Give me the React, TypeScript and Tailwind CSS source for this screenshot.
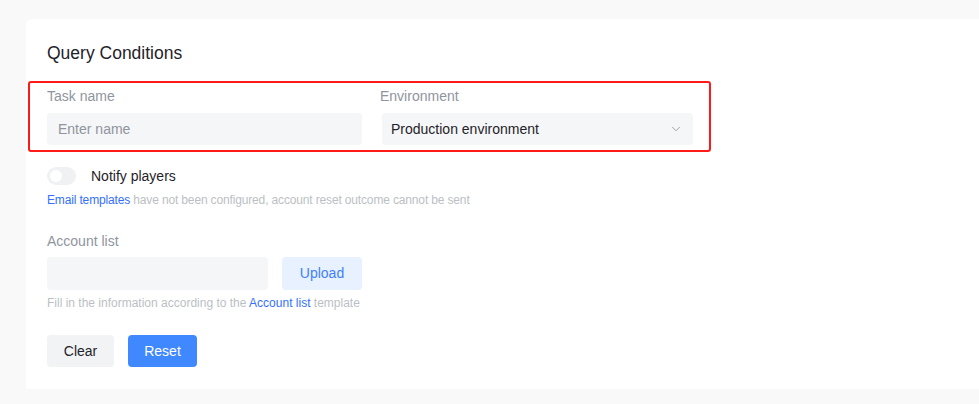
import { ChevronDown } from "lucide-react";

const App = () => {
  return (
    <div
      className="w-[979px] h-[404px] bg-[#f9f9f9] pl-[26px] pt-[19px] overflow-hidden"
      style={{ fontFamily: '"Liberation Sans", Arial, sans-serif' }}
    >
      <div className="h-[370px] w-[960px] bg-white rounded-tl-md pl-[21px] pt-[23px]">
        {/* Title */}
        <h2 className="text-[17.5px] leading-[22px] text-[#1f2329]">Query Conditions</h2>

        {/* Highlighted row */}
        <div className="mt-[17px] -ml-[19px] w-[683px] h-[71px] border-2 border-[#ff1a1a] rounded-[3px] pl-[17px] pt-[3px] flex gap-[20px]">
          <div className="w-[315px]">
            <div className="text-[14px] leading-[20px] text-[#8f959e]">Task name</div>
            <div className="mt-[7px] h-[32px] bg-[#f5f6f7] rounded-[4px] px-[11px] flex items-center text-[14px] text-[#8f959e]">
              Enter name
            </div>
          </div>
          <div className="w-[311px]">
            <div className="text-[14px] leading-[20px] text-[#8f959e] -ml-[2px]">Environment</div>
            <div className="mt-[7px] h-[32px] bg-[#f5f6f7] rounded-[4px] pl-[9px] pr-[10px] flex items-center justify-between text-[14px] text-[#1f2329]">
              <span>Production environment</span>
              <ChevronDown className="w-[14px] h-[14px] text-[#8f959e]" strokeWidth={1.5} />
            </div>
          </div>
        </div>

        {/* Notify toggle */}
        <div className="mt-[14px] flex items-center h-[20px]">
          <div className="w-[29px] h-[18px] rounded-full bg-[#f0f1f2] flex items-center pl-[3px]">
            <div className="w-[12px] h-[12px] rounded-full bg-white" />
          </div>
          <span className="ml-[15px] text-[14px] text-[#1f2329]">Notify players</span>
        </div>
        <div className="mt-[5px] text-[12px] leading-[18px] text-[#bbbfc4] tracking-[-0.15px]">
          <span className="text-[#3370ff]">Email templates</span> have not been configured, account reset outcome cannot be sent
        </div>

        {/* Account list */}
        <div className="mt-[22px] text-[14px] leading-[20px] text-[#8f959e]">Account list</div>
        <div className="mt-[6px] flex gap-[14px]">
          <div className="w-[221px] h-[33px] bg-[#f5f6f7] rounded-[4px]" />
          <button className="w-[80px] h-[33px] bg-[#e8f1ff] rounded-[4px] text-[14px] text-[#4080ff]">Upload</button>
        </div>
        <div className="mt-[4px] text-[12px] leading-[18px] text-[#bbbfc4]">
          Fill in the information according to the <span className="text-[#3370ff]">Account list</span> template
        </div>

        {/* Actions */}
        <div className="mt-[23px] flex gap-[14px]">
          <button className="w-[67px] h-[32px] bg-[#f2f3f5] rounded-[4px] text-[14px] text-[#1f2329]">Clear</button>
          <button className="w-[69px] h-[32px] bg-[#4088ff] rounded-[4px] text-[14px] text-white">Reset</button>
        </div>
      </div>
    </div>
  );
};

export default App;
